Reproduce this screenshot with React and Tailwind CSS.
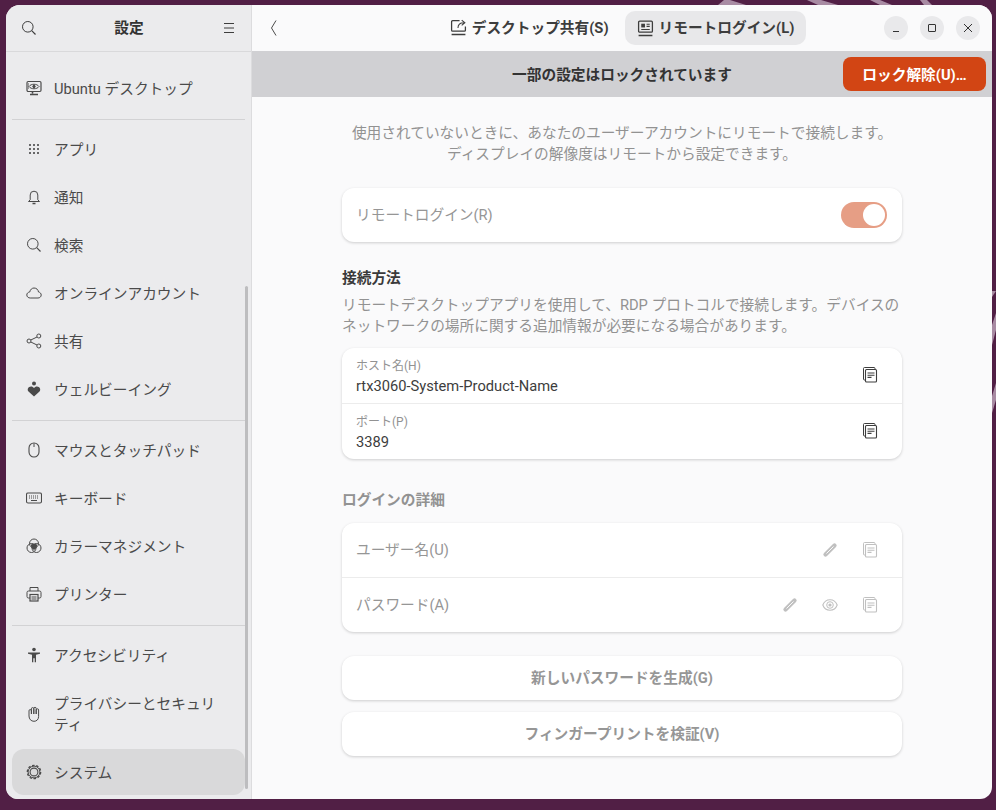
import React from 'react';

const jp = 'font-["Roboto","Noto_Sans_CJK_JP",sans-serif]';

// symbolic icons, all on a 16 box
const Svg = ({ children, className = 'w-4 h-4' }) => (
    <svg viewBox="0 0 16 16" fill="none" stroke="currentColor" strokeWidth="1" className={`shrink-0 ${className}`}>
        {children}
    </svg>
);

const SearchIcon = () => (
    <Svg>
        <circle cx="6.8" cy="6.8" r="5.3" />
        <path d="M10.7 10.7 14.5 14.5" strokeWidth="1.2" />
    </Svg>
);
const MenuIcon = () => (
    <Svg>
        <path d="M3 3.5h10M3 8h10M3 12.500h10" />
    </Svg>
);
const DesktopIcon = () => (
    <Svg>
        <rect x="1" y="1.5" width="14" height="10" rx="1.2" strokeWidth="1.2" />
        <path d="M3 6.5c2-3 8-3 10 0-2 3-8 3-10 0Z" />
        <circle cx="8" cy="6.5" r="1.2" fill="currentColor" />
        <path d="M2 4h1M2 6h1M2 8h1" />
        <path d="M6.5 11.5v2M4 14.5h8" strokeWidth="1.6" />
    </Svg>
);
const GridIcon = () => (
    <Svg>
        {[4, 8, 12].map((y) => [4, 8, 12].map((x) => (
            <rect key={`${x}-${y}`} x={x - 0.9} y={y - 0.9} width="1.8" height="1.8" fill="currentColor" stroke="none" />
        )))}
    </Svg>
);
const BellIcon = () => (
    <Svg>
        <path d="M4.200 10.800V6a3.800 3.800 0 0 1 7.600 0v4.800l1.700 1.700h-11l1.700-1.700Z" />
        <path d="M6.500 14.500h3" strokeWidth="1.400" />
    </Svg>
);
const CloudIcon = () => (
    <Svg>
        <path d="M4.200 13C2.300 13 .8 11.700.8 10s1.300-2.800 2.900-3C4.300 4.500 6 3 8 3c2.500 0 4.200 1.700 4.500 4 1.600.3 2.700 1.500 2.700 3 0 1.700-1.400 3-3.200 3H4.200Z" />
    </Svg>
);
const ShareIcon = () => (
    <Svg>
        <circle cx="3" cy="8" r="2" />
        <circle cx="12.800" cy="3" r="2" />
        <circle cx="12.800" cy="13" r="2" />
        <path d="M4.800 7 11 4M4.800 9l6.200 3" />
    </Svg>
);
const WellbeingIcon = () => (
    <Svg>
        <circle cx="8" cy="2.500" r="2" fill="currentColor" stroke="none" />
        <path d="M8 15.500 2.500 10.500C.8 8.500 2.300 5.500 5 5.500c1.300 0 2.300.6 3 1.500.7-.9 1.700-1.500 3-1.500 2.700 0 4.200 3 2.500 5L8 15.500Z" fill="currentColor" stroke="none" />
    </Svg>
);
const MouseIcon = () => (
    <Svg>
        <rect x="3" y="1" width="10" height="14" rx="5" strokeWidth="1.100" />
        <path d="M8 1.500v3.500" />
    </Svg>
);
const KeyboardIcon = () => (
    <Svg>
        <rect x=".5" y="3" width="15" height="10" rx="1.500" strokeWidth="1.100" />
        <path d="M3 6h10M3 8h10" strokeDasharray="1 1" />
        <path d="M5 10.500h6" />
    </Svg>
);
const ColorIcon = () => (
    <Svg>
        <circle cx="8" cy="5.500" r="4.500" />
        <circle cx="5.500" cy="10" r="4.500" />
        <circle cx="10.500" cy="10" r="4.500" />
        <path d="M5 6.500c2-1 4-1 6 0 .5 2-1 4.500-3 5.500-2-1-3.500-3.500-3-5.500Z" fill="currentColor" stroke="none" />
    </Svg>
);
const PrinterIcon = () => (
    <Svg>
        <path d="M4 5V1.500h8V5" />
        <path d="M4 12H2.500A1.500 1.500 0 0 1 1 10.500v-4A1.500 1.500 0 0 1 2.500 5h11A1.500 1.500 0 0 1 15 6.500v4a1.500 1.500 0 0 1-1.500 1.500H12" />
        <rect x="4" y="8.500" width="8" height="6.500" strokeWidth="1.200" />
        <path d="M5.500 11h5M5.500 13h5" />
    </Svg>
);
const AccessIcon = () => (
    <Svg>
        <circle cx="8" cy="2.500" r="1.800" fill="currentColor" stroke="none" />
        <path d="M2 5.500h12v1.300l-4 1v7.500H8.700v-4h-1.400v4H6V7.800l-4-1V5.500Z" fill="currentColor" stroke="none" />
    </Svg>
);
const HandIcon = () => (
    <Svg>
        <path d="M3 10V4.800a1.200 1.200 0 0 1 2.400 0V8M5.400 8V2.800a1.200 1.200 0 0 1 2.400 0V8M7.800 8V2.500a1.200 1.200 0 0 1 2.400 0V8M10.200 8V4a1.200 1.200 0 0 1 2.400 0v6.500c0 3-2 4.800-4.600 4.800C5 15.300 3 13 3 10" />
    </Svg>
);
const GearIcon = () => (
    <Svg>
        <circle cx="8" cy="8" r="3.900" strokeWidth="1.100" />
        <circle cx="8" cy="8" r="6.700" strokeWidth="1.300" strokeDasharray="2.500 1.700" />
        <circle cx="8" cy="8" r="5.900" strokeWidth="1" />
    </Svg>
);
const ScreenShareIcon = () => (
    <Svg className="w-[17px] h-[17px]">
        <path d="M9 1.500H2.500a1 1 0 0 0-1 1v8a1 1 0 0 0 1 1h11a1 1 0 0 0 1-1V7" strokeWidth="1.200" />
        <path d="M7.500 8.500c0-3 2-5 5.500-5M11 1l3 2.500L11 6" />
        <path d="M1.500 14.500h13" strokeWidth="1.400" />
    </Svg>
);
const RemoteIcon = () => (
    <Svg className="w-[17px] h-[17px]">
        <rect x="1.500" y="1" width="13" height="10.500" rx="1" strokeWidth="1.200" />
        <rect x="4" y="3.500" width="3.500" height="3.500" fill="currentColor" stroke="none" />
        <path d="M9 4h3M9 6h3M4 9h8" />
        <path d="M1.500 14.500h13" strokeWidth="1.400" />
    </Svg>
);
const CopyIcon = () => (
    <Svg>
        <rect x="1.500" y=".5" width="11.500" height="12.500" rx="1" />
        <rect x="3.500" y="2.500" width="11" height="12.500" rx="1" strokeWidth="1.100" fill="white" />
        <path d="M5.500 6h7M5.500 8.200h7M5.500 10.400h4" strokeWidth="1.100" />
    </Svg>
);
const PencilIcon = () => (
    <Svg>
        <path d="M3.500 12.500 12.500 3.500" strokeWidth="4.200" strokeLinecap="round" />
        <path d="M4.500 11.500 11.500 4.500" stroke="white" strokeWidth=".9" />
    </Svg>
);
const EyeIcon = () => (
    <Svg>
        <path d="M.8 8C3.500 1 12.500 1 15.200 8 12.500 15 3.500 15 .8 8Z" strokeWidth="1.100" />
        <circle cx="8" cy="8" r="3.300" />
        <circle cx="8" cy="8" r="1.600" fill="currentColor" stroke="none" />
    </Svg>
);

const navGroups = [
    [{ label: 'Ubuntu デスクトップ', icon: DesktopIcon }],
    [
        { label: 'アプリ', icon: GridIcon },
        { label: '通知', icon: BellIcon },
        { label: '検索', icon: SearchIcon },
        { label: 'オンラインアカウント', icon: CloudIcon },
        { label: '共有', icon: ShareIcon },
        { label: 'ウェルビーイング', icon: WellbeingIcon },
    ],
    [
        { label: 'マウスとタッチパッド', icon: MouseIcon },
        { label: 'キーボード', icon: KeyboardIcon },
        { label: 'カラーマネジメント', icon: ColorIcon },
        { label: 'プリンター', icon: PrinterIcon },
    ],
    [
        { label: 'アクセシビリティ', icon: AccessIcon },
        { label: 'プライバシーとセキュリティ', icon: HandIcon, tall: true },
        { label: 'システム', icon: GearIcon, active: true },
    ],
];

function Sidebar() {
    return (
        <aside className="relative w-[246px] shrink-0 bg-[#ebebed] border-r border-[#dcdcde] flex flex-col">
            <div className="h-[47px] shrink-0 border-b border-[#d9d9db] flex items-center justify-between pl-[15px] pr-[14px] text-[#3d3d3d]">
                <SearchIcon />
                <span className="text-[14.7px] font-bold text-[#333]">設定</span>
                <MenuIcon />
            </div>
            <nav className="flex-1 pt-3 px-[6px] flex flex-col">
                {navGroups.map((group, i) => (
                    <div key={i} className={i > 0 ? 'mt-[7px] pt-[5px] border-t border-[#d2d2d4]' : ''}>
                        {group.map((item) => {
                            const Icon = item.icon;
                            return (
                                <div
                                    key={item.label}
                                    className={`w-[233px] flex items-center gap-3 pl-3.5 pr-7 text-[14.7px] leading-[21px] text-[#4a4a4a] rounded-xl
                ${item.tall ? 'h-[70px]' : item.active ? 'h-[46px]' : 'h-12'} ${item.active ? 'bg-[#d9d9da]' : ''}`}
                                >
                                    <Icon />
                                    <span className="pt-[2px]">{item.label}</span>
                                </div>
                            );
                        })}
                    </div>
                ))}
            </nav>
            {/* overlay scrollbar */}
            <div className="absolute left-[239px] top-[281px] w-[3px] h-[503px] rounded-full bg-[#bdbdbf]" />
        </aside>
    );
}

function WinButton({ children }) {
    return <div className="w-6 h-6 rounded-full bg-[#e9e9eb] flex items-center justify-center text-[#333]">{children}</div>;
}

function Header() {
    return (
        <header className="relative h-[46px] shrink-0 bg-[#fafafb] flex items-center justify-center">
            <svg viewBox="0 0 8 16" fill="none" stroke="#4a4a4a" strokeWidth="1" className="absolute left-[18px] top-[15px] w-2 h-4">
                <path d="M6 .5 1.500 8 6 15.500" />
            </svg>
            <div className="ml-3 flex items-center gap-4 text-[14.7px] font-bold text-[#3d3d3d]">
                <div className="flex items-center gap-[5px]">
                    <ScreenShareIcon />
                    <span>デスクトップ共有(S)</span>
                </div>
                <div className="h-[34px] pl-3 pr-3 rounded-[10px] bg-[#e8e8ea] flex items-center gap-[5px]">
                    <RemoteIcon />
                    <span>リモートログイン(L)</span>
                </div>
            </div>
            <div className="absolute right-3 top-[11px] flex gap-3">
                <WinButton>
                    <svg viewBox="0 0 16 16" stroke="currentColor" className="w-4 h-4"><path d="M5 11.500h6" /></svg>
                </WinButton>
                <WinButton>
                    <svg viewBox="0 0 16 16" fill="none" stroke="currentColor" className="w-4 h-4"><rect x="4.500" y="4.500" width="7" height="7" rx=".5" /></svg>
                </WinButton>
                <WinButton>
                    <svg viewBox="0 0 16 16" stroke="currentColor" className="w-4 h-4"><path d="m4 4 8 8m0-8-8 8" /></svg>
                </WinButton>
            </div>
        </header>
    );
}

function Row({ height, children, border }) {
    return (
        <div className={`flex items-center justify-between pl-[14px] pr-6 ${height} ${border ? 'border-b border-[#ececec]' : ''}`}>
            {children}
        </div>
    );
}

function InfoRow({ label, value, height, border }) {
    return (
        <Row height={height} border={border}>
            <div>
                <div className="text-xs leading-[23px] text-[#929292]">{label}</div>
                <div className="text-[14.7px] leading-[21px] mt-[-2px]">{value}</div>
            </div>
            <div className="mb-[2px]">
                <CopyIcon />
            </div>
        </Row>
    );
}

const cardCls = 'w-[560px] bg-white rounded-xl shadow-[0_1px_3px_rgba(0,0,0,0.18)]';

export default function App() {
    return (
        <div className={`relative w-[996px] h-[810px] bg-[#511f45] overflow-hidden pt-[5px] pl-[6px] pr-1 pb-3 ${jp}`}>
            {/* wallpaper stripes behind the window */}
            <svg viewBox="0 0 996 810" className="absolute inset-0 w-[996px] h-[810px]" fill="#a88ba3">
                <path d="M718 5 724 0h6L746 5Z" />
                <path d="M807 0h14L838 5H818Z" />
                <path d="M870 0h10L892 5H880Z" />
                <path d="M920 0h7L932 5H924Z" />
                <path d="M992 291 996 291 992 297Z" />
                <path d="M992 325 996 313V330L992 345Z" />
                <path d="M992 396 996 383V400L992 413Z" />
            </svg>
            <div className="relative h-[794px] rounded-t-[14px] rounded-b-xl overflow-hidden flex bg-[#fafafb]">
                <Sidebar />
                <main className="flex-1 min-w-0 flex flex-col">
                    <Header />
                    <div className="relative h-[46px] shrink-0 bg-[#d0d0d3] pt-[3px] flex items-center justify-center text-[14.7px] font-bold text-[#333]">
                        一部の設定はロックされています
                        <div className="absolute right-[6px] top-[6px] w-[143px] h-[34px] pt-[2px] rounded-lg bg-[#d24514] text-white flex items-center justify-center">
                            ロック解除(U)…
                        </div>
                    </div>
                    <div className="flex-1 flex flex-col items-center">
                        <p className="mt-[26px] text-[14.7px] leading-[21px] text-[#929292] text-center">
                            使用されていないときに、あなたのユーザーアカウントにリモートで接続します。<br />
                            ディスプレイの解像度はリモートから設定できます。
                        </p>
                        <div className={`mt-[23px] ${cardCls} h-[54px] flex items-center justify-between pl-[14px] pr-[15px]`}>
                            <span className="pt-[1px] text-[14.7px] text-[#969696]">リモートログイン(R)</span>
                            <div className="w-[46px] h-[26px] rounded-full bg-[#e69e85] flex items-center justify-end pr-[2px]">
                                <div className="w-[22px] h-[22px] rounded-full bg-white" />
                            </div>
                        </div>
                        <div className="w-[560px] mt-[25px]">
                            <h2 className="text-[14.7px] leading-[22px] font-bold text-[#3a3a3a]">接続方法</h2>
                            <p className="mt-[6px] text-[14.7px] leading-[21px] text-[#929292]">
                                リモートデスクトップアプリを使用して、RDP プロトコルで接続します。デバイスの<br />
                                ネットワークの場所に関する追加情報が必要になる場合があります。
                            </p>
                        </div>
                        <div className={`mt-[11px] ${cardCls} text-[#3d3d3d]`}>
                            <InfoRow label="ホスト名(H)" value="rtx3060-System-Product-Name" height="h-[56px]" border />
                            <InfoRow label="ポート(P)" value="3389" height="h-[55px]" />
                        </div>
                        <h2 className="w-[560px] mt-[30px] text-[14.7px] leading-[22px] font-bold text-[#929292]">ログインの詳細</h2>
                        <div className={`mt-[12px] ${cardCls} text-[#c0c0c0]`}>
                            <Row height="h-[55px]" border>
                                <span className="text-[14.7px] text-[#969696]">ユーザー名(U)</span>
                                <div className="flex gap-6">
                                    <PencilIcon />
                                    <CopyIcon />
                                </div>
                            </Row>
                            <Row height="h-[54px]">
                                <span className="text-[14.7px] text-[#969696]">パスワード(A)</span>
                                <div className="flex gap-6">
                                    <PencilIcon />
                                    <EyeIcon />
                                    <CopyIcon />
                                </div>
                            </Row>
                        </div>
                        <div className={`mt-[24px] ${cardCls} h-[44px] pt-[1px] flex items-center justify-center text-[14.7px] font-bold text-[#969696]`}>
                            新しいパスワードを生成(G)
                        </div>
                        <div className={`mt-3 ${cardCls} h-[44px] pt-[1px] flex items-center justify-center text-[14.7px] font-bold text-[#969696]`}>
                            フィンガープリントを検証(V)
                        </div>
                    </div>
                </main>
            </div>
        </div>
    );
}
